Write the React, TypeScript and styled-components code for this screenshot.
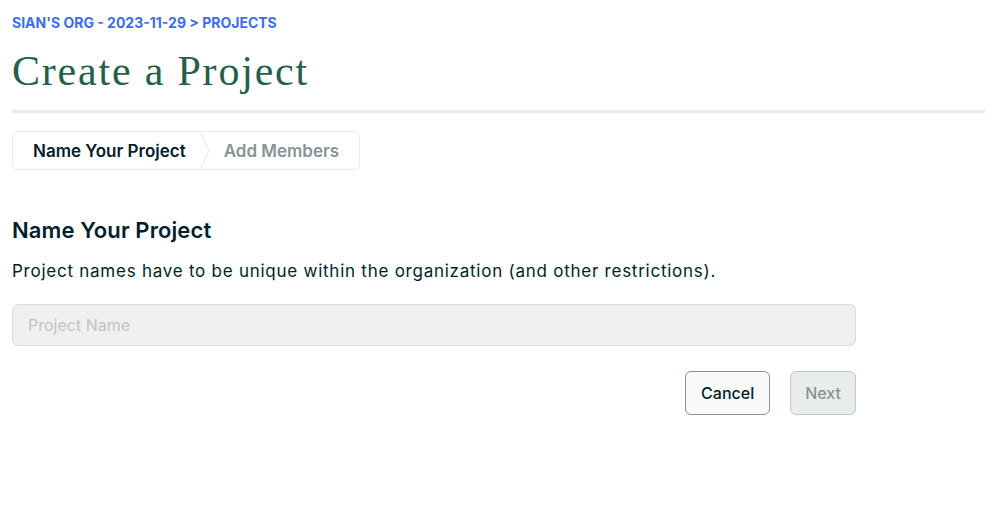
import styled, { createGlobalStyle } from "styled-components";

const GlobalStyle = createGlobalStyle`
  body {
    margin: 0;
    background-color: #ffffff;
    font-family: Inter, "Noto Sans", sans-serif;
    color: #001e2b;
  }

  * {
    box-sizing: border-box;
  }
`;

const Page = styled.div`
  padding: 14px 0 0 12px;
`;

const Breadcrumb = styled.div`
  font-size: 14px;
  font-weight: 700;
  line-height: 18px;
  color: #3d6de8;
  text-transform: uppercase;
`;

const Title = styled.h1`
  margin: 11px 0 0;
  font-family: "Liberation Serif", serif;
  font-weight: 400;
  font-size: 42px;
  line-height: 56px;
  letter-spacing: 1.8px;
  color: #245f4a;
`;

const Divider = styled.hr`
  margin: 11px 0 0;
  border: 0;
  height: 3px;
  background-color: #e8edeb;
`;

const Steps = styled.div`
  display: inline-flex;
  align-items: stretch;
  margin-top: 18px;
  height: 39px;
  border: 1px solid #e8edeb;
  border-radius: 5px;
`;

const Step = styled.div<{ $active?: boolean }>`
  display: flex;
  align-items: center;
  padding: ${(p) => (p.$active ? "0 13px 0 20px" : "0 20px 0 13px")};
  font-size: 17px;
  font-weight: 600;
  color: ${(p) => (p.$active ? "#001e2b" : "#889397")};
`;

const Chevron = styled.svg`
  display: block;
  width: 12px;
  height: 39px;
  margin-top: -1px;
`;

const SectionTitle = styled.h2`
  margin: 46px 0 0;
  font-size: 22px;
  font-weight: 600;
  line-height: 28px;
  letter-spacing: 0.1px;
`;

const Description = styled.p`
  margin: 15px 0 0;
  font-size: 17px;
  line-height: 24px;
  letter-spacing: 0.75px;
`;

const Form = styled.div`
  width: 844px;
`;

const NameInput = styled.input`
  display: block;
  width: 100%;
  height: 42px;
  margin-top: 21px;
  padding: 0 15px;
  font-family: inherit;
  font-size: 16px;
  color: #001e2b;
  background-color: #f0f0f0;
  border: 1px solid #dcdcdc;
  border-radius: 6px;

  &::placeholder {
    color: #c1c4c5;
  }

  &:focus {
    outline: none;
    border-color: #016bf8;
  }
`;

const Actions = styled.div`
  display: flex;
  justify-content: flex-end;
  gap: 20px;
  margin-top: 25px;
`;

const Button = styled.button<{ $disabled?: boolean }>`
  height: 44px;
  padding: ${(p) => (p.$disabled ? "0 14px" : "0 15px")};
  font-family: inherit;
  font-size: 16px;
  font-weight: 500;
  border-radius: 6px;
  cursor: ${(p) => (p.$disabled ? "not-allowed" : "pointer")};
  color: ${(p) => (p.$disabled ? "#889397" : "#001e2b")};
  background-color: ${(p) => (p.$disabled ? "#e8edeb" : "#f9fbfa")};
  border: 1px solid ${(p) => (p.$disabled ? "#c1c7c6" : "#889397")};
`;

export default function App() {
  return (
    <>
      <GlobalStyle />
      <Page>
        <Breadcrumb>Sian's Org - 2023-11-29 &gt; Projects</Breadcrumb>
        <Title>Create a Project</Title>
        <Divider />
        <Steps>
          <Step $active>Name Your Project</Step>
          <Chevron viewBox="0 0 12 39">
            <polyline
              points="1,0 10,19.5 1,39"
              fill="none"
              stroke="#e8edeb"
              strokeWidth="1.2"
            />
          </Chevron>
          <Step>Add Members</Step>
        </Steps>
        <Form>
          <SectionTitle>Name Your Project</SectionTitle>
          <Description>
            Project names have to be unique within the organization (and other
            restrictions).
          </Description>
          <NameInput placeholder="Project Name" />
          <Actions>
            <Button>Cancel</Button>
            <Button $disabled disabled>
              Next
            </Button>
          </Actions>
        </Form>
      </Page>
    </>
  );
}
